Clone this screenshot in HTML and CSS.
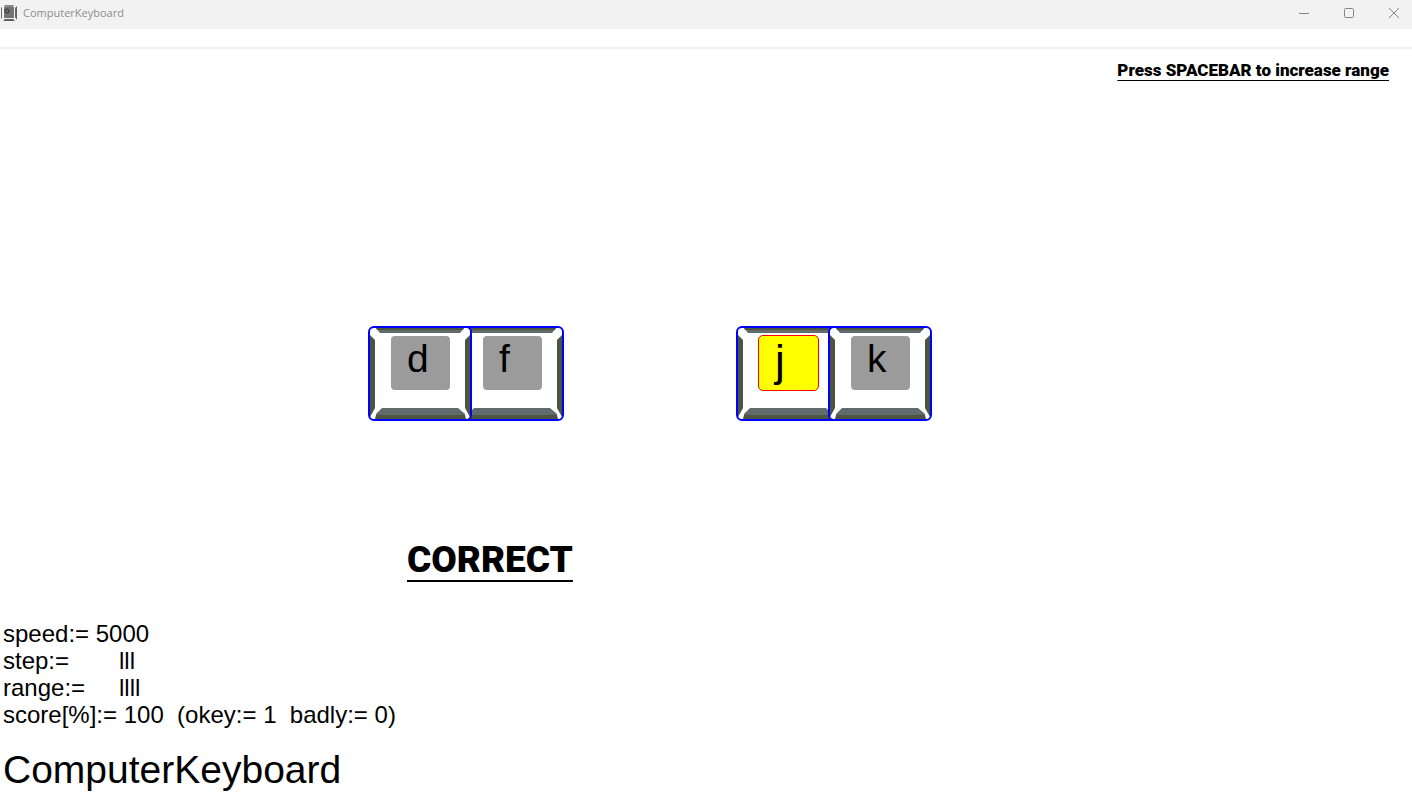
FILE: index.html
```html
<!DOCTYPE html>
<html lang="en">
<head>
    <meta charset="UTF-8">
    <meta name="viewport" content="width=device-width, initial-scale=1.0">
    <title>ComputerKeyboard</title>
    <link rel="stylesheet" href="styles.css">
</head>
<body>
    <!-- bevel shared by all keys -->
    <svg class="defs" width="0" height="0" aria-hidden="true">
        <symbol id="bevel" viewBox="0 0 104 95">
            <rect x="1" y="1" width="102" height="93" rx="5" fill="#fff" />
            <path d="M2 9L7 14V82L2 91Z" fill="#4d543f" />
            <path d="M102 9L97 14V82L102 91Z" fill="#4d543f" />
            <path d="M8 2H96L92 7H12Z" fill="#606b6c" />
            <path d="M8 2H96L95 4H9Z" fill="#4d543f" />
            <path d="M14 82H90L97 88V93H8V88Z" fill="#606b6c" />
            <path d="M8 89H97L98 93H7Z" fill="#4d543f" />
            <rect x="1" y="1" width="102" height="93" rx="5" fill="none" stroke="#00f" stroke-width="2" />
        </symbol>
    </svg>

    <header class="titlebar">
        <svg class="app-icon" width="16" height="16" viewBox="0 0 16 16" aria-hidden="true">
            <path d="M3 0H13L12 2H4Z" fill="#8a8a8a" />
            <rect x="3" y="2" width="10" height="11" fill="#747474" />
            <path d="M0 2L1 3V13L0 14Z" fill="#666" />
            <path d="M16 1L14 3V12L16 15Z" fill="#666" />
            <path d="M4 14H12L14 16H2Z" fill="#606060" />
            <circle cx="6" cy="6" r="2" fill="none" stroke="#333" />
        </svg>
        <span class="caption">ComputerKeyboard</span>
        <div class="window-buttons">
            <button type="button" aria-label="Minimize">
                <svg width="12" height="12" viewBox="0 0 12 12"><path d="M1 6.500H11" /></svg>
            </button>
            <button type="button" aria-label="Maximize">
                <svg width="12" height="12" viewBox="0 0 12 12"><rect x="1.500" y="1.500" width="9" height="9" rx="1" /></svg>
            </button>
            <button type="button" aria-label="Close">
                <svg width="12" height="12" viewBox="0 0 12 12"><path d="M1 1L11 11M11 1L1 11" /></svg>
            </button>
        </div>
    </header>
    <div class="toolbar"></div>

    <main>
        <p class="hint">Press SPACEBAR to increase range</p>

        <div class="keyboard">
            <div class="hand left">
                <button type="button" class="key"><svg class="bevel"><use href="#bevel" /></svg><span class="cap">d</span></button>
                <button type="button" class="key"><svg class="bevel"><use href="#bevel" /></svg><span class="cap">f</span></button>
            </div>
            <div class="hand right">
                <button type="button" class="key"><svg class="bevel"><use href="#bevel" /></svg><span class="cap active">j</span></button>
                <button type="button" class="key"><svg class="bevel"><use href="#bevel" /></svg><span class="cap">k</span></button>
            </div>
        </div>

        <p class="result">CORRECT</p>

        <div class="status">
            <p>speed:= 5000</p>
            <p><span class="label">step:=</span>lll</p>
            <p><span class="label">range:=</span>llll</p>
            <p>score[%]:= 100  (okey:= 1  badly:= 0)</p>
        </div>

        <h1>ComputerKeyboard</h1>
    </main>
</body>
</html>
```

FILE: styles.css
```css
* {
    margin: 0;
    padding: 0;
    box-sizing: border-box;
}

body {
    display: flex;
    flex-direction: column;
    min-height: 100vh;
    background: #fff;
    color: #000;
    font-family: "Liberation Sans", Arial, sans-serif;
}

button {
    border: none;
    background: none;
    color: inherit;
    font: inherit;
}

.defs {
    position: absolute;
}

.titlebar {
    display: flex;
    align-items: center;
    height: 29px;
    padding: 0 0 3px 1px;
    background: #f2f2f2;
}

.caption {
    margin-left: 6px;
    color: #8e8e8e;
    font: 11px/16px "Open Sans", "Noto Sans", sans-serif;
}

.window-buttons {
    display: flex;
    margin-left: auto;
}

.window-buttons button {
    display: flex;
    align-items: center;
    justify-content: center;
    width: 45px;
    height: 26px;
}

.window-buttons button:last-child {
    width: 41px;
    justify-content: flex-start;
    padding-left: 17px;
}

.window-buttons svg {
    fill: none;
    stroke: #858585;
}

.toolbar {
    height: 20px;
    border-bottom: 2px solid #f0f0f0;
}

main {
    display: flex;
    flex: 1;
    flex-direction: column;
}

.hint,
.result {
    font-family: Impact, Roboto, "Liberation Sans", sans-serif;
    font-weight: 900;
    text-decoration: underline;
    text-decoration-skip-ink: none;
}

.hint {
    margin: 9px 23px 0 0;
    font-size: 17px;
    line-height: 24px;
    text-align: right;
    text-decoration-thickness: 1px;
    text-underline-offset: 4px;
}

.keyboard {
    display: flex;
    gap: 172px;
    margin-top: 244px;
    padding-left: 368px;
}

.hand {
    display: flex;
}

.key {
    position: relative;
    display: flex;
    width: 104px;
    height: 95px;
    padding: 9px 0 0 22px;
    text-align: left;
}

/* neighbouring keys overlap, home side on top */
.key + .key {
    margin-left: -12px;
}

.left .key:first-child {
    z-index: 1;
}

.bevel {
    position: absolute;
    top: 0;
    left: 0;
    width: 100%;
    height: 100%;
}

.cap {
    position: relative;
    width: 61px;
    height: 56px;
    padding-left: 16px;
    border: 1px solid transparent;
    border-radius: 5px;
    background: #9b9b9b;
    background-clip: padding-box;
    font-size: 39px;
    line-height: 46px;
}

.cap.active {
    border-color: #f00;
    background: #ff0;
    font-size: 44px;
    line-height: 50px;
}

.result {
    margin-top: 109px;
    padding-left: 407px;
    font-size: 37px;
    line-height: 60px;
    text-decoration-thickness: 2px;
    text-underline-offset: 8px;
}

.status {
    margin-top: auto;
    padding-left: 3px;
    font-size: 24px;
    line-height: 27px;
}

.status p {
    white-space: pre;
}

.label {
    display: inline-block;
    width: 116px;
}

h1 {
    margin-top: 18px;
    padding: 0 0 2px 3px;
    font-size: 39px;
    font-weight: normal;
    line-height: 48px;
}
```
